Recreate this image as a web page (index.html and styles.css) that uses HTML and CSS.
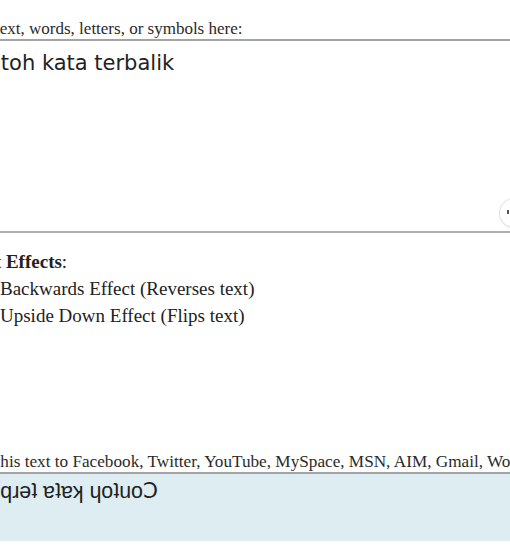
FILE: index.html
```html
<!DOCTYPE html>
<html>
<head>
<meta charset="utf-8">
<link rel="stylesheet" href="styles.css">
</head>
<body>
<div class="page">
  <label class="lead" for="src">Enter text, words, letters, or symbols here:</label>
  <div class="input-wrap">
    <textarea id="src" class="input">Contoh kata terbalik</textarea>
    <span class="fab"><span class="fab-dot"></span></span>
  </div>

  <div class="effects">
    <div class="effects-title"><b>Text Effects</b>:</div>
    <label class="option"><input type="checkbox" class="check"><span>Backwards Effect (Reverses text)</span></label>
    <label class="option"><input type="checkbox" class="check" checked><span>Upside Down Effect (Flips text)</span></label>
  </div>

  <div class="copy-label">Copy this text to Facebook, Twitter, YouTube, MySpace, MSN, AIM, Gmail, WordPress, Blogger and more:</div>
  <div class="output">ʞılɐqɹǝʇ ɐʇɐʞ ɥoʇuoↃ</div>
</div>
</body>
</html>
```

FILE: styles.css
```css
html, body {
  margin: 0;
  padding: 0;
  background: #ffffff;
  overflow: hidden;
}

.page {
  margin-left: -42px;
  width: 640px;
  padding-top: 19px;
  font-family: "Liberation Serif", "Times New Roman", serif;
  color: #222;
}

.lead {
  display: block;
  margin-left: -4px;
  font-size: 17px;
  line-height: 20px;
  color: #2a2a2a;
}

.input-wrap {
  position: relative;
  margin-top: 0;
}

.input {
  display: block;
  box-sizing: border-box;
  width: 640px;
  height: 194px;
  margin: 0;
  padding: 10px 2px 10px 0;
  border: 2px solid #a3a3a3;
  border-bottom-color: #b0b0b0;
  font-family: "DejaVu Sans", Verdana, sans-serif;
  font-size: 21px;
  line-height: 24px;
  color: #222;
  background: #fff;
  resize: none;
  outline: none;
}

.fab {
  position: absolute;
  left: 542px;
  top: 160px;
  width: 28px;
  height: 28px;
  border-radius: 50%;
  background: #fff;
  box-shadow: 0 0 0 1px #e2e2e2, 0 1px 3px rgba(0,0,0,0.12);
}

.fab-dot {
  position: absolute;
  left: 7px;
  top: 11px;
  width: 2px;
  height: 4px;
  background: #556;
}

.effects {
  margin-top: 15px;
  font-size: 19px;
  line-height: 27px;
  color: #222;
}

.effects-title {
  padding-left: 8px;
}

.option {
  display: flex;
  align-items: center;
  gap: 8px;
  padding-left: 21px;
  height: 27px;
}

.check {
  width: 13px;
  height: 13px;
  margin: 0;
}

.copy-label {
  margin-top: 123px;
  margin-left: -4px;
  font-size: 17.2px;
  line-height: 20px;
  white-space: nowrap;
  color: #2a2a2a;
}

.output {
  margin-top: 0;
  height: 61px;
  padding: 6px 0 0 9px;
  border-top: 2px solid #a3a3a3;
  background: #ddedf1;
  font-family: "Liberation Sans", Arial, "DejaVu Sans", sans-serif;
  font-size: 21.4px;
  line-height: 23px;
  color: #222;
  white-space: nowrap;
}
```
